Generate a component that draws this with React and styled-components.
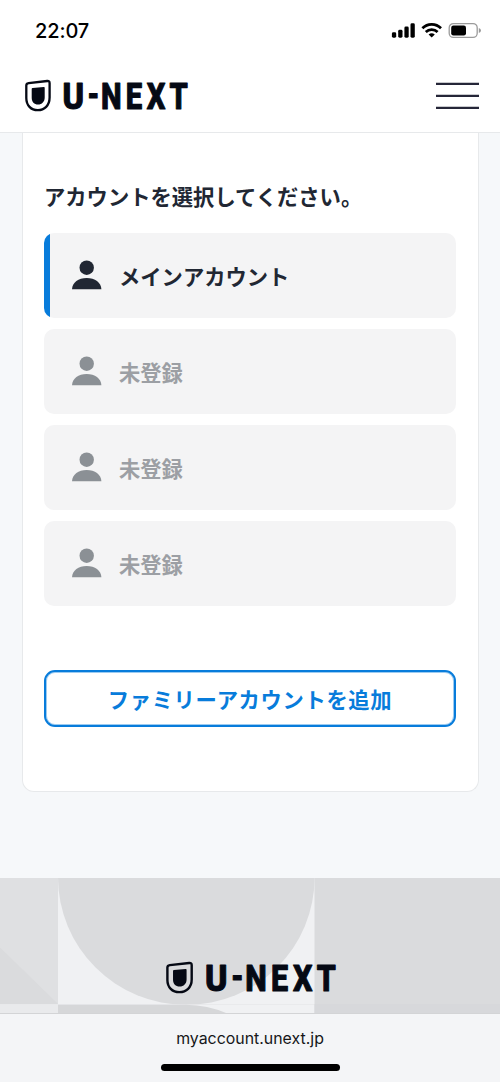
import React from "react"
import styled, {createGlobalStyle, css} from "styled-components";

const colors = {
  ink: "#212733",
  black: "#050914",
  muted: "#9c9fa4",
  blue: "#087cdb",
  page: "#f6f8fa",
  row: "#f4f4f5",
  line: "#e7e9eb",
}

const accounts = [
  {id: 1, name: "メインアカウント", active: true},
  {id: 2, name: "未登録"},
  {id: 3, name: "未登録"},
  {id: 4, name: "未登録"},
]

const Logo = ({width = 164}) => (
    <LogoSvg $width={width} viewBox="0 0 164 32" preserveAspectRatio="none" role="img" aria-label="U-NEXT">
        <path
            d="M4.6 3.2 L23.2 1 Q25.6 0.8 25.6 3.2 V17.5 C25.6 25.5 20.4 30.2 13.8 30.2 C7 30.2 2.3 25.3 2.3 18 V5.6 Q2.3 3.5 4.6 3.2 Z"
            fill="none"
            stroke={colors.black}
            strokeWidth="2.3"
        />
        <path
            d="M8.6 8 L19.8 7 Q20.7 6.9 20.7 7.8 V17.5 C20.7 21.8 17.9 24.5 14.1 24.5 C10.2 24.5 7.7 21.7 7.7 17.7 V8.9 Q7.7 8.1 8.6 8 Z"
            fill={colors.black}
        />
        <WordMark>
            <text transform="translate(38.4 29.4) scale(0.87 1)">U</text>
            <text transform="translate(63.6 26.8) scale(0.74 1)">-</text>
            <text transform="scale(0.78 1)" x="98.6 130.4 157.3 186.6" y="29.4">NEXT</text>
        </WordMark>
    </LogoSvg>
)

const PersonIcon = () => (
    <Person viewBox="0 0 30 30">
        <circle cx="14.7" cy="7.7" r="7.2"/>
        <path d="M0 29.3 C0.4 22.3 6.4 18 14.7 18 C23 18 29 22.3 29.4 29.3 Z"/>
    </Person>
)

const StatusIcons = () => (
    <StatusSvg viewBox="0 0 92 18">
        <rect x="1.9" y="10.3" width="4.3" height="5.4" rx="1.4"/>
        <rect x="8.2" y="7.8" width="4.3" height="7.9" rx="1.4"/>
        <rect x="14.4" y="4.6" width="4.3" height="11.1" rx="1.4"/>
        <rect x="20.5" y="1.3" width="4.3" height="14.4" rx="1.4"/>
        <g fill="none" stroke="#000" strokeWidth="2.7">
            <path d="M32.4 6.2 A13 13 0 0 1 51 6.2"/>
            <path d="M35.8 10 A8.4 8.4 0 0 1 47.6 10"/>
        </g>
        <path d="M41.7 15.6 L38.6 12.5 A4.7 4.7 0 0 1 44.8 12.5 Z"/>
        <rect x="59.2" y="1.6" width="28" height="13.8" rx="4.2" fill="none" stroke="#9b9b9b" strokeWidth="1.3"/>
        <rect x="61.2" y="3.6" width="14.8" height="9.8" rx="2.2"/>
        <path d="M88.8 6 Q91 6.6 91 8.5 Q91 10.4 88.8 11 Z" fill="#999"/>
    </StatusSvg>
)

// decorative tiles behind the footer logo
const FooterPattern = () => (
    <Pattern viewBox="0 0 500 136" preserveAspectRatio="none">
        <rect width="500" height="136" fill="#dadbdd"/>
        <rect width="58" height="127" fill="#dfe0e2"/>
        <path d="M0 70 L58 127 H0 Z" fill="#dadbdd"/>
        <rect y="127" width="58" height="9" fill="#e9eaec"/>
        <rect x="58" width="256.5" height="127.5" fill="#f0f1f3"/>
        <circle cx="186.3" cy="-0.5" r="128.3" fill="#dadbdd"/>
        <rect x="58" y="127.6" width="256.5" height="9" fill="#f0f1f3"/>
        <path d="M58 127.6 H186 Q208 128 226 136 H58 Z" fill="#d6d7d9"/>
        <rect x="314.5" y="127" width="185.5" height="9" fill="#d7d8db"/>
    </Pattern>
)

const App = () => (
    <Page>
        <GlobalStyle/>
        <StatusBar>
            <Time>22:07</Time>
            <StatusIcons/>
        </StatusBar>
        <Header>
            <Logo/>
            <MenuButton aria-label="menu">
                <MenuLine/>
                <MenuLine/>
                <MenuLine/>
            </MenuButton>
        </Header>
        <Main>
            <Card>
                <Title>アカウントを選択してください。</Title>
                <AccountList>
                    {accounts.map(account => (
                        <AccountItem key={account.id} $active={account.active}>
                            <PersonIcon/>
                            <span>{account.name}</span>
                        </AccountItem>
                    ))}
                </AccountList>
                <AddButton>ファミリーアカウントを追加</AddButton>
            </Card>
        </Main>
        <Footer>
            <FooterPattern/>
            <Logo width={171}/>
        </Footer>
        <BrowserBar>
            <Url>myaccount.unext.jp</Url>
            <HomeIndicator/>
        </BrowserBar>
    </Page>
)

export default App

const GlobalStyle = createGlobalStyle`
  * {
    box-sizing: border-box;
  }

  body {
    margin: 0;
    background: ${colors.page};
    font-family: "Noto Sans CJK JP", sans-serif;
  }
`

const Page = styled.div`
  display: flex;
  flex-direction: column;
  width: 500px;
  height: 1082px;
  overflow: hidden;
  background: ${colors.page};
`

const StatusBar = styled.div`
  display: flex;
  justify-content: space-between;
  align-items: center;
  height: 62px;
  padding: 0 18px 0 35px;
  background: #fff;
`

const Time = styled.span`
  font-family: Inter, sans-serif;
  font-size: 20px;
  font-weight: 500;
  letter-spacing: -0.1px;
  color: #000;
`

const StatusSvg = styled.svg`
  width: 92px;
  height: 18px;
`

const Header = styled.header`
  display: flex;
  justify-content: space-between;
  align-items: center;
  height: 71px;
  padding: 0 21px 3px 24px;
  background: #fff;
  border-bottom: 1px solid ${colors.line};
`

const LogoSvg = styled.svg`
  position: relative;
  width: ${props => props.$width}px;
  height: 32px;
  overflow: visible;
`

const WordMark = styled.g`
  font-family: Roboto, sans-serif;
  font-size: 37.5px;
  font-weight: 800;
  fill: ${colors.black};
  stroke: ${colors.black};
  stroke-width: 1.1px;
  stroke-linejoin: round;
`

const MenuButton = styled.button`
  display: flex;
  flex-direction: column;
  gap: 10px;
  padding: 0;
  border: 0;
  background: none;
`

const MenuLine = styled.span`
  width: 43px;
  height: 2px;
  background: #252638;
  box-shadow: 0 -1px 0 rgba(37, 38, 56, 0.25);
`

const Main = styled.main`
  height: 745px;
  padding: 0 21px 0 22px;
`

const Card = styled.section`
  height: 659px;
  padding: 47px 22px 0 21px;
  background: #fff;
  border: 1px solid ${colors.line};
  border-top: 0;
  border-radius: 0 0 12px 12px;
`

const Title = styled.h1`
  margin: 0;
  font-size: 21.3px;
  line-height: 32px;
  font-weight: 700;
  white-space: nowrap;
  color: ${colors.ink};
`

const AccountList = styled.ul`
  display: flex;
  flex-direction: column;
  gap: 11px;
  margin: 21px 0 0;
  padding: 0;
  list-style: none;
`

const AccountItem = styled.li`
  display: flex;
  align-items: center;
  gap: 17px;
  height: 85px;
  padding: 0 0 1px 28px;
  border-radius: 10px;
  background: ${colors.row};
  font-size: 21.3px;
  font-weight: 700;
  color: ${colors.muted};
  fill: #8b9095;

  ${props => props.$active && css`
    background: linear-gradient(to right, ${colors.blue} 6px, ${colors.row} 6px);
    color: ${colors.ink};
    fill: ${colors.ink};
  `}
`

const Person = styled.svg`
  width: 30px;
  height: 30px;
`

const AddButton = styled.button`
  width: 100%;
  height: 57px;
  margin-top: 64px;
  padding: 0;
  border: 2px solid ${colors.blue};
  border-radius: 11px;
  background: #fff;
  box-shadow: inset 0 0 0 1px rgba(8, 124, 219, 0.4);
  font-family: inherit;
  font-size: 21.3px;
  font-weight: 700;
  letter-spacing: 0.65px;
  color: ${colors.blue};
`

//-------------------------------------------

const Footer = styled.footer`
  position: relative;
  display: flex;
  justify-content: center;
  height: 135px;
  padding-top: 84px;
`

const Pattern = styled.svg`
  position: absolute;
  top: 0;
  left: 0;
  width: 100%;
  height: 100%;
`

const BrowserBar = styled.div`
  display: flex;
  flex-direction: column;
  align-items: center;
  height: 69px;
  padding-top: 14px;
  border-top: 1px solid #d3d4d6;
  background: #f4f5f7;
`

const Url = styled.span`
  font-family: Inter, sans-serif;
  font-size: 15.9px;
  line-height: 22px;
  color: #161719;
`

const HomeIndicator = styled.div`
  width: 179px;
  height: 7px;
  margin-top: 14px;
  border-radius: 4px;
  background: #000;
`
